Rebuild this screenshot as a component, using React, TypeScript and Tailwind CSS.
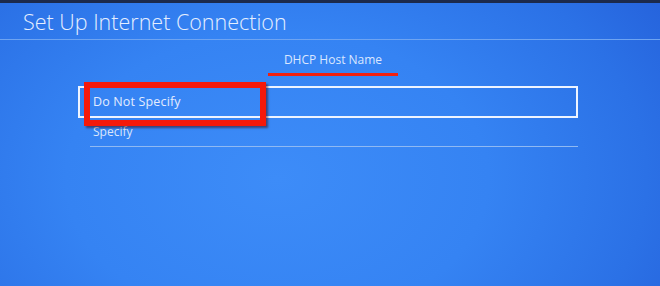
export default function App() {
  return (
    <div
      className="relative w-[660px] h-[286px] overflow-hidden border-t-[3px] border-[#1c2a4c] bg-[radial-gradient(ellipse_80%_130%_at_42%_62%,#3d8cf8_0%,#3583f3_40%,#2b71e6_70%,#2259d5_100%)] text-white"
      style={{ fontFamily: '"Open Sans", "Noto Sans", sans-serif' }}
    >
      {/* header */}
      <div className="h-[36px] pl-[23px] flex items-center pt-[2px]">
        <h1 className="text-[21.5px] font-light leading-none text-[#e6efff]">
          Set Up Internet Connection
        </h1>
      </div>
      <div className="h-px bg-[#6ea4f2]" />

      {/* tab */}
      <div className="flex justify-center mt-[12px] pl-[6px]">
        <div className="flex flex-col items-center">
          <span className="text-[12px] leading-[16px] text-[#dbe7ff]">DHCP Host Name</span>
          <div className="mt-[5px] h-[3px] w-[130px] bg-[#f2200f]" />
        </div>
      </div>

      {/* options */}
      <div className="ml-[78px] w-[500px] mt-[10px]">
        <div className="h-[32px] border-2 border-[#eef4ff] flex items-center pl-[13px]">
          <span className="text-[12.5px] tracking-[0.15px] text-[#e3ecff]">Do Not Specify</span>
        </div>
        <div className="h-[28px] flex items-center pl-[15px]">
          <span className="text-[12px] text-[#dbe6fb]">Specify</span>
        </div>
        <div className="ml-[12px] h-px bg-[#8fb9f3]" />
      </div>

      {/* red annotation box */}
      <div className="absolute left-[84px] top-[79px] w-[182px] h-[44px] border-[6px] border-[#f5190b] shadow-[2px_2px_2px_rgba(60,0,0,0.5)]" />
    </div>
  );
}
